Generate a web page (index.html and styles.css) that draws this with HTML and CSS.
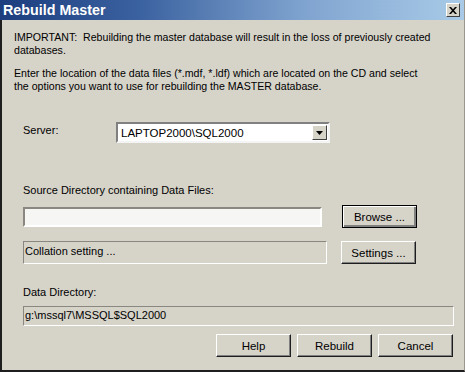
FILE: index.html
```html
<!DOCTYPE html>
<html lang="en">
<head>
    <meta charset="UTF-8">
    <title>Rebuild Master</title>
    <link rel="stylesheet" href="styles.css">
</head>
<body>
    <div class="window">
        <div class="titlebar">
            <span class="title">Rebuild Master</span>
            <span class="close">
                <svg width="8" height="7" viewBox="0 0 8 7"><path d="M0 0h2l2 2.2L6 0h2L5 3.5 8 7H6L4 4.8 2 7H0l3-3.5z" fill="#000"/></svg>
            </span>
        </div>

        <div class="content">
            <p class="note">IMPORTANT:&nbsp; Rebuilding the master database will result in the loss of previously created<br>databases.</p>
            <p class="note second">Enter the location of the data files (*.mdf, *.ldf) which are located on the CD and select<br>the options you want to use for rebuilding the MASTER database.</p>

            <div class="server-row">
                <span class="label">Server:</span>
                <div class="combo">
                    <span class="combo-text">LAPTOP2000\SQL2000</span>
                    <span class="combo-btn">
                        <svg width="7" height="4" viewBox="0 0 7 4"><path d="M0 0h7L3.5 4z" fill="#000"/></svg>
                    </span>
                </div>
            </div>

            <div class="label source-label">Source Directory containing Data Files:</div>
            <div class="field-row">
                <div class="edit"></div>
                <button class="btn default">Browse ...</button>
            </div>
            <div class="field-row collation-row">
                <div class="readonly collation">Collation setting ...</div>
                <button class="btn">Settings ...</button>
            </div>

            <div class="label data-label">Data Directory:</div>
            <div class="readonly datadir">g:\mssql7\MSSQL$SQL2000</div>

            <div class="actions">
                <button class="btn">Help</button>
                <button class="btn">Rebuild</button>
                <button class="btn">Cancel</button>
            </div>
        </div>
    </div>
</body>
</html>
```

FILE: styles.css
```css
body {
    margin: 0;
    font-family: "Liberation Sans", Arial, sans-serif;
    font-size: 11px;
    color: #000;
}

.window {
    width: 465px;
    height: 372px;
    box-sizing: border-box;
    background: #d6d3c9;
    border-left: 2px solid #1e1e1e;
    border-bottom: 2px solid #1e1e1e;
    border-right: 1px solid #9a978f;
    display: flex;
    flex-direction: column;
}

.titlebar {
    height: 20px;
    margin-left: -2px;
    background: linear-gradient(to right, #1c3d7e 0%, #3b62a0 30%, #7fa3cf 65%, #a9cbe8 100%);
    display: flex;
    align-items: center;
    justify-content: space-between;
    padding: 0 4px 0 3px;
}

.title {
    color: #fff;
    font-weight: bold;
    font-size: 14.3px;
}

.close {
    width: 12px;
    height: 12px;
    background: #d6d3c9;
    border-top: 1px solid #fff;
    border-left: 1px solid #fff;
    border-right: 1px solid #404040;
    border-bottom: 1px solid #404040;
    display: flex;
    align-items: center;
    justify-content: center;
}

.content {
    padding: 11px 0 0 12px;
    display: flex;
    flex-direction: column;
}

.note {
    margin: 0;
    line-height: 13px;
    font-size: 10.6px;
}

.note.second {
    margin-top: 10px;
}

.label {
    line-height: 13px;
}

.server-row {
    display: flex;
    align-items: center;
    margin-top: 29px;
    padding-left: 9px;
}

.server-row .label {
    width: 93px;
    margin-top: -4px;
}

.combo {
    width: 210px;
    height: 17px;
    background: #fff;
    border-top: 2px solid #808080;
    border-left: 2px solid #808080;
    border-right: 2px solid #f4f4f4;
    border-bottom: 2px solid #f4f4f4;
    display: flex;
    align-items: center;
    justify-content: space-between;
}

.combo-text {
    padding-left: 3px;
    font-size: 11.5px;
}

.combo-btn {
    width: 13px;
    height: 13px;
    margin-right: 1px;
    background: #d6d3c9;
    border-top: 1px solid #fff;
    border-left: 1px solid #fff;
    border-right: 1px solid #404040;
    border-bottom: 1px solid #404040;
    display: flex;
    align-items: center;
    justify-content: center;
}

.source-label {
    margin-top: 41px;
    padding-left: 9px;
}

.field-row {
    display: flex;
    align-items: center;
    margin-top: 8px;
    padding-left: 9px;
}

.collation-row {
    margin-top: 13px;
}

.edit {
    width: 295px;
    height: 16px;
    background: #f6f6f4;
    border-top: 2px solid #8a8780;
    border-left: 2px solid #8a8780;
    border-right: 2px solid #fff;
    border-bottom: 2px solid #fff;
    margin-right: 20px;
}

.readonly {
    box-sizing: border-box;
    border-top: 1px solid #8a8780;
    border-left: 1px solid #8a8780;
    border-right: 1px solid #fff;
    border-bottom: 1px solid #fff;
    padding: 3px 0 0 1px;
    line-height: 13px;
}

.collation {
    width: 304px;
    height: 23px;
    margin-right: 14px;
}

.btn {
    box-sizing: border-box;
    width: 75px;
    height: 23px;
    background: #d6d3c9;
    font-family: "Liberation Sans", Arial, sans-serif;
    font-size: 11.5px;
    color: #000;
    border-top: 1px solid #fff;
    border-left: 1px solid #fff;
    border-right: 1px solid #1e1e1e;
    border-bottom: 1px solid #1e1e1e;
    box-shadow: inset -1px -1px 0 #808080;
    padding: 0;
}

.btn.default {
    border: 1px solid #000;
    box-shadow: inset 1px 1px 0 #fff, inset -2px -2px 0 #808080;
}

.data-label {
    margin-top: 22px;
    padding-left: 9px;
}

.datadir {
    margin-top: 7px;
    margin-left: 9px;
    width: 431px;
    height: 20px;
    padding-top: 2px;
}

.actions {
    display: flex;
    justify-content: flex-end;
    gap: 6px;
    margin-top: 8px;
    padding-right: 11px;
}
```
